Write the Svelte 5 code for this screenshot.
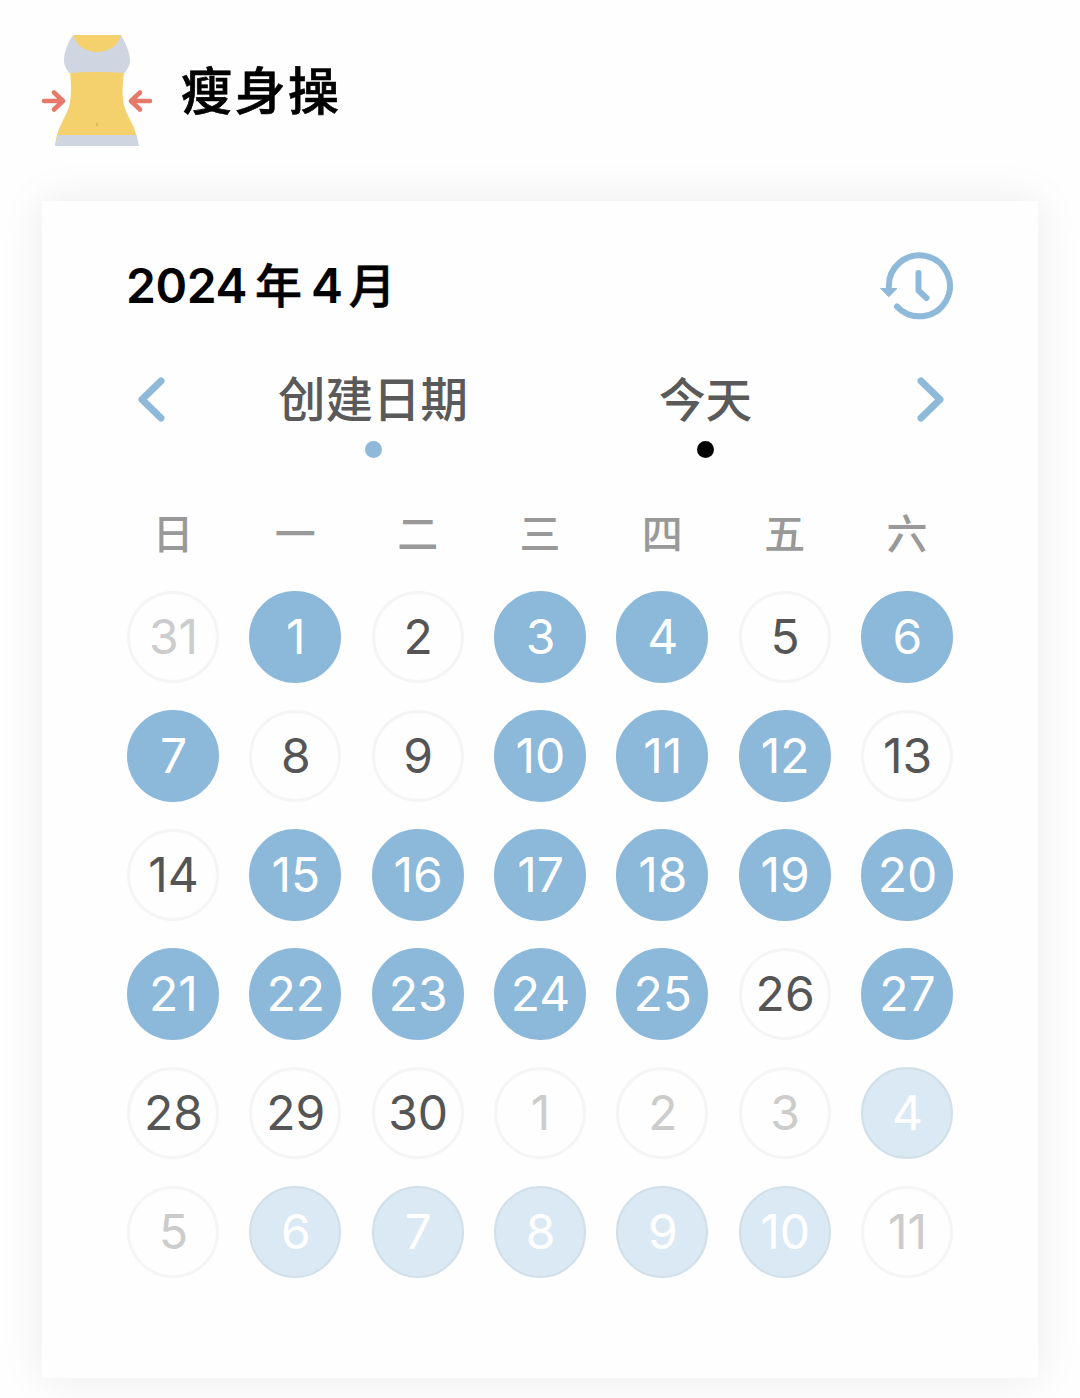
<script>
  const weekdays = ['日', '一', '二', '三', '四', '五', '六'];
  const checked = new Set([1, 3, 4, 6, 7, 10, 11, 12, 15, 16, 17, 18, 19, 20, 21, 22, 23, 24, 25, 27]);
  const checkedNext = new Set([4, 6, 7, 8, 9, 10]);

  const days = [
    { n: 31, out: true, done: false },
    ...Array.from({ length: 30 }, (_, i) => ({ n: i + 1, out: false, done: checked.has(i + 1) })),
    ...Array.from({ length: 11 }, (_, i) => ({ n: i + 1, out: true, done: checkedNext.has(i + 1) })),
  ];
</script>

<div class="page">
  <header>
    <svg class="logo" width="112" height="112" viewBox="0 0 112 112">
      <path fill="#f4d16d" d="M33 0H80L83 38C81 52 81 62 83.500 72C87 84 96 92 97 111H14C16 92 24 84 28 72C30.500 62 30.500 52 29 36Z" />
      <path fill="#cfd5e1" d="M32 0C36 12 46 17 56 17C66 17 77 12 80 0C84 7 89 17 89 26C89 31 86 34 84 38C67 36.500 45 36.500 28 38C26 34 23 31 23 26C23 17 27 7 32 0Z" />
      <path fill="#cfd5e1" d="M16.500 100H95.500L98 111H14Z" />
      <path d="M56 88V91" stroke="#d6ad52" stroke-width="1.200" stroke-linecap="round" />
      <g fill="none" stroke="#e7796a" stroke-width="4.600" stroke-linecap="round" stroke-linejoin="round">
        <path d="M3 66H22M13 57.500L22 66L13 74.500" />
        <path d="M109 66H90M99 57.500L90 66L99 74.500" />
      </g>
    </svg>
    <h1>瘦身操</h1>
  </header>

  <main class="card">
    <div class="top">
      <h2><span class="num">2024</span><span class="cjk year">年</span><span class="num">4</span><span class="cjk month">月</span></h2>
      <svg class="history" width="76" height="72" viewBox="0 0 76 72" fill="none" stroke="#8fb9d9" stroke-linecap="round" stroke-linejoin="round">
        <path stroke-width="6" stroke-linecap="butt" d="M10 38A30.500 30.500 0 1 1 18 56.500" />
        <path stroke-width="6" d="M18 56.500L18.500 57" />
        <path fill="#8fb9d9" stroke-width="1" d="M2 38.500H18L10 46.500Z" />
        <path stroke-width="6" d="M39.500 23V40.500L47.500 48" />
      </svg>
    </div>

    <nav>
      <svg class="chevron" width="46" height="46" viewBox="0 0 46 46"><path d="M34 5L15 23.500L34 42" /></svg>
      <div class="legend created"><span>创建日期</span><i></i></div>
      <div class="legend today"><span>今天</span><i></i></div>
      <svg class="chevron" width="46" height="46" viewBox="0 0 46 46"><path d="M14 5L33 23.500L14 42" /></svg>
    </nav>

    <div class="week">
      {#each weekdays as w}<span>{w}</span>{/each}
    </div>
    <div class="days">
      {#each days as d}
        <div class="day" class:out={d.out} class:done={d.done}><span>{d.n}</span></div>
      {/each}
    </div>
  </main>
</div>

<style>
  :global(body) {
    margin: 0;
    background: #fefefe;
  }
  .page {
    box-sizing: border-box;
    width: 1080px;
    height: 1398px;
    padding: 35px 42px 0 41px;
    overflow: hidden;
    font-family: Inter, 'Noto Sans CJK SC', sans-serif;
    color: #000;
  }
  header {
    display: flex;
    align-items: center;
    height: 112px;
    gap: 28px;
  }
  h1,
  h2 {
    margin: 0;
    font-weight: 500;
  }
  h1 {
    padding-bottom: 6px;
    font: 500 51px/60px 'Noto Sans CJK SC', sans-serif;
    letter-spacing: 2.500px;
    -webkit-text-stroke: 0.700px #000;
  }
  .card {
    box-sizing: border-box;
    width: 996px;
    height: 1177px;
    margin: 54px 0 0 1px;
    padding: 49px 85px 0;
    background: #fefefe;
    box-shadow: 0 0 42px rgba(0, 0, 0, 0.08);
  }
  .top {
    display: flex;
    justify-content: space-between;
    height: 72px;
  }
  h2 {
    display: flex;
    align-items: center;
    margin-left: -1px;
    line-height: 72px;
  }
  .num {
    font-size: 48px;
    font-weight: 600;
    letter-spacing: -0.400px;
  }
  .cjk {
    padding-bottom: 6px;
    font-family: 'Noto Sans CJK SC', sans-serif;
    font-size: 47px;
    -webkit-text-stroke: 0.600px #000;
  }
  .year {
    margin: 0 9px 0 8px;
  }
  .month {
    margin-left: 6px;
  }
  .history {
    margin-right: -2px;
  }
  nav {
    display: flex;
    height: 136px;
    margin-top: 54px;
  }
  .chevron {
    flex: none;
    fill: none;
    stroke: #8fb9d9;
    stroke-width: 7;
    stroke-linecap: round;
    stroke-linejoin: round;
  }
  .legend {
    display: flex;
    flex-direction: column;
    align-items: center;
    font: 500 47.500px/46px 'Noto Sans CJK SC', sans-serif;
    color: #5a5a5a;
  }
  .legend span {
    height: 46px;
    margin: -2px 0 2px;
  }
  .legend i {
    width: 17px;
    height: 17px;
    margin-top: 19px;
    border-radius: 50%;
    background: #8fb9d9;
  }
  .created {
    margin: 0 191px 0 105px;
  }
  .today {
    margin-right: 155px;
  }
  .today span {
    font-size: 46.500px;
  }
  .today i {
    background: #000;
  }
  .week,
  .days {
    display: grid;
    grid-template-columns: repeat(7, 92px);
    justify-content: space-between;
  }
  .week {
    box-sizing: border-box;
    height: 82px;
    margin-top: -3px;
    font: 500 41px/44px 'Noto Sans CJK SC', sans-serif;
    text-align: center;
    color: #999;
  }
  .days {
    row-gap: 27px;
  }
  .day {
    box-sizing: border-box;
    display: flex;
    align-items: center;
    justify-content: center;
    width: 92px;
    height: 92px;
    border: 3px solid #f5f5f5;
    border-radius: 50%;
    font-size: 48px;
    line-height: 86px;
    color: #555;
  }
  .day span {
    padding-left: 1px;
  }
  .out {
    color: #ccc;
  }
  .done {
    background: #8cb8da;
    border-color: #8cb8da;
    color: #fff;
  }
  .done.out {
    background: #dbe9f4;
    border: 2px solid #d1dfe9;
  }
</style>
